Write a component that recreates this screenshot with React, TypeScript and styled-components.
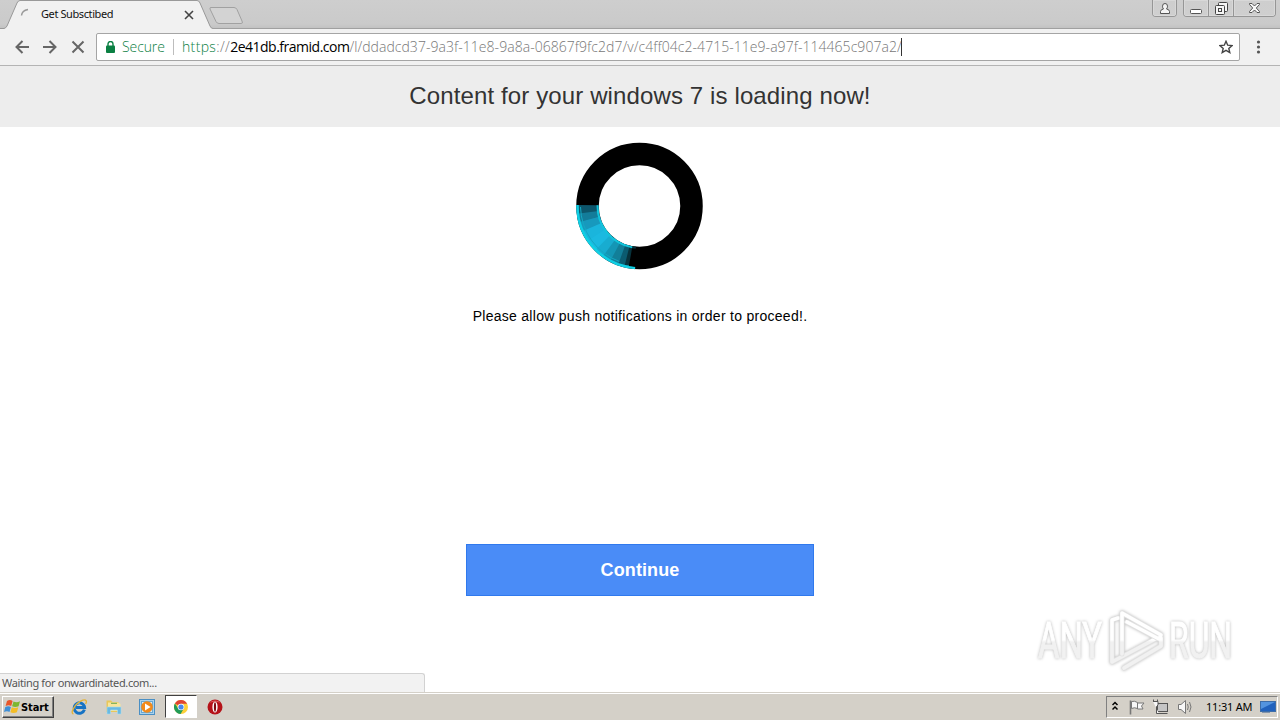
import styled, { createGlobalStyle, css } from "styled-components";

/*--------------------------
    Styled
--------------------------*/
const UiFont = css`
    font-family: "Noto Sans", "Open Sans", sans-serif;
`;

const GlobalStyle = createGlobalStyle`
    * {
        box-sizing: border-box;
    }

    body {
        margin: 0;
        background-color: #fff;
        overflow: hidden;
    }

    svg {
        display: block;
        flex-shrink: 0;
    }
`;

const Desktop = styled.div`
    position: relative;
    display: flex;
    flex-direction: column;
    width: 1280px;
    height: 720px;
    overflow: hidden;
`;

const TabStrip = styled.div`
    display: flex;
    height: 29px;
    background: linear-gradient(#cecece 0, #cacaca 24px, #c2c2c2 28px);
    border-bottom: 1px solid #a0a0a0;
`;
const Tab = styled.div`
    position: relative;
    display: flex;
    width: 208px;
    height: 29px;
    padding: 0 14px 0 20px;
    align-items: center;
`;
const TabShape = styled.svg`
    position: absolute;
    top: 0;
    left: 0;
`;
const TabSpinner = styled.svg`
    position: relative;
`;
const TabTitle = styled.span<{ $width: number }>`
    position: relative;
    width: ${(props) => props.$width}px;
    margin: 0 0 2px 7px;
    color: #111;
    font-size: 11px;
    line-height: 26px;
    letter-spacing: -0.4px;
    white-space: nowrap;
    ${UiFont}
`;
const TabClose = styled.svg`
    position: relative;
    margin: 1px 0 0 auto;
`;
const WindowControls = styled.div`
    display: flex;
    margin: 0 4px 0 auto;
    gap: 6px;
`;
const ControlGroup = styled.div`
    display: flex;
    height: 17px;
    border: 1px solid #969696;
    border-top: 0;
    border-radius: 0 0 4px 4px;
    overflow: hidden;
`;
const ControlButton = styled.div<{ $width: number }>`
    display: flex;
    width: ${(props) => props.$width}px;
    align-items: center;
    justify-content: center;
    background: linear-gradient(#cecece, #cfcfcf);
    box-shadow: inset 0 0 0 1px #d8d8d8;

    & + & {
        border-left: 1px solid #969696;
    }
`;

const Toolbar = styled.div`
    display: flex;
    height: 37px;
    padding: 0 15px 0 15px;
    align-items: center;
    background-color: #f1f1f1;
    border-bottom: 1px solid #b4b4b4;
`;
const NavButtons = styled.div`
    display: flex;
    width: 81px;
    gap: 14px;
`;
const AddressBar = styled.div`
    display: flex;
    width: 1144px;
    height: 28px;
    margin-right: 16px;
    padding: 0 6px 0 9px;
    align-items: center;
    border: 1px solid #a5a5a5;
    border-radius: 2px;
    background-color: #fff;
    font-size: 14px;
    font-weight: 300;
    line-height: 26px;
    white-space: nowrap;
    font-family: "Open Sans", "Noto Sans", sans-serif;
`;
const Secure = styled.span`
    width: 51px;
    margin-left: 7px;
    padding-right: 8px;
    color: #0b8043;
    letter-spacing: -0.1px;
`;
const Divider = styled.span`
    width: 1px;
    height: 16px;
    margin-right: 8px;
    background-color: #bdbdbd;
`;
const UrlPart = styled.span<{ $color: string; $spacing?: number; $weight?: number }>`
    color: ${(props) => props.$color};
    letter-spacing: ${(props) => props.$spacing ?? 0}px;
    font-weight: ${(props) => props.$weight ?? 300};
`;
const Caret = styled.span`
    width: 1px;
    height: 18px;
    margin-left: -1px;
    background-color: #333;
`;
const Star = styled.svg`
    margin-left: auto;
`;

const Page = styled.main`
    display: flex;
    height: 626px;
    flex-direction: column;
    align-items: center;
    background-color: #fff;
    font-family: "Liberation Sans", Arial, sans-serif;
`;
const PageHeader = styled.h1`
    width: 100%;
    height: 61px;
    margin: 0 0 15px 0;
    background-color: #ededed;
    color: #333;
    font-size: 24px;
    font-weight: normal;
    line-height: 60px;
    letter-spacing: 0.12px;
    text-align: center;
`;
const Message = styled.p`
    margin: 37px 0 0 0;
    color: #000;
    font-size: 14px;
    line-height: 18px;
    letter-spacing: 0.28px;
`;
const ContinueButton = styled.button`
    width: 348px;
    height: 52px;
    margin: 219px 0 0 0;
    padding: 0;
    border: 1px solid #3079ed;
    background-color: #4a8cf7;
    color: #fff;
    font-family: inherit;
    font-size: 18px;
    font-weight: bold;
    letter-spacing: 0.1px;
`;

const StatusBubble = styled.div`
    position: absolute;
    left: 0;
    bottom: 28px;
    width: 425px;
    height: 19px;
    padding-left: 2px;
    border: 1px solid #d2d2d2;
    border-left: 0;
    border-bottom: 0;
    border-radius: 0 3px 0 0;
    background-color: #f2f2f2;
    color: #555;
    font-size: 11px;
    line-height: 18px;
    letter-spacing: -0.37px;
    white-space: nowrap;
    ${UiFont}
`;
const Watermark = styled.svg`
    position: absolute;
    right: 30px;
    bottom: 40px;
    overflow: visible;
    filter: drop-shadow(0 0 1.5px rgba(0, 0, 0, 0.28));
`;

const Taskbar = styled.div`
    display: flex;
    height: 28px;
    padding: 3px 2px 2px;
    background-color: #d4d0c8;
    box-shadow: inset 0 1px 0 #d4d0c8, inset 0 2px 0 #fff;
`;
const StartButton = styled.div`
    display: flex;
    width: 52px;
    height: 22px;
    margin-top: 1px;
    padding-left: 1px;
    align-items: center;
    border: 1px solid;
    border-color: #fff #404040 #404040 #fff;
    box-shadow: inset -1px -1px 0 #808080;
    color: #000;
    font-family: "DejaVu Sans Condensed", "Noto Sans", sans-serif;
    font-size: 11px;
    font-weight: bold;
    letter-spacing: -0.1px;
`;
const QuickLaunch = styled.div`
    display: flex;
    margin-left: 9px;
`;
const TaskItem = styled.div<{ $active?: boolean }>`
    display: flex;
    width: 34px;
    height: 23px;
    padding-right: 2px;
    align-items: center;
    justify-content: center;
    ${(props) =>
        props.$active &&
        css`
            width: 32px;
            margin-right: 2px;
            padding-right: 0;
            border: 1px solid;
            border-color: #404040 #fff #fff #404040;
            background-color: #fff;
        `}
`;
const Tray = styled.div`
    display: flex;
    width: 172px;
    height: 22px;
    margin: 1px 0 0 auto;
    padding: 0 1px 0 5px;
    align-items: center;
    border: 1px solid;
    border-color: #808080 #fff #fff #808080;
`;
const Clock = styled.span`
    width: 47px;
    margin: 0 8px 0 12px;
    color: #000;
    font-size: 11px;
    letter-spacing: -0.2px;
    line-height: 18px;
    padding-bottom: 1px;
    white-space: nowrap;
    ${UiFont}
`;

/*--------------------------
    Loading ring
--------------------------*/
const ringPoint = (radius: number, degree: number) => {
    const angle = (degree * Math.PI) / 180;
    return `${63.5 + radius * Math.cos(angle)} ${64 + radius * Math.sin(angle)}`;
};

const ringArc = (radius: number, from: number, to: number) =>
    `M${ringPoint(radius, from)} A${radius} ${radius} 0 0 1 ${ringPoint(radius, to)}`;

const ringSegments = [
    { from: 95, to: 105, color: "#07323c" },
    { from: 104, to: 111, color: "#0b5b70" },
    { from: 110, to: 119, color: "#127f99" },
    { from: 118, to: 127, color: "#1496b5" },
    { from: 126, to: 136, color: "#18acd0" },
    { from: 135, to: 147, color: "#1bb9e0" },
    { from: 146, to: 157, color: "#1ab5dc" },
    { from: 156, to: 166, color: "#1799bd" },
    { from: 165, to: 174, color: "#137c9a" },
    { from: 173, to: 181, color: "#0d566c" },
];

const LoadingRing = () => (
    <svg width="129" height="128" viewBox="0 0 129 128">
        <circle cx="63.5" cy="64" r="52" fill="none" stroke="#000" strokeWidth="22.5" />
        {ringSegments.map(({ from, to, color }) => (
            <path key={from} d={ringArc(52, from, to)} fill="none" stroke={color} strokeWidth="22" />
        ))}
        <path d={ringArc(62, 94, 181)} fill="none" stroke="#10cfe4" strokeWidth="2.6" />
        <path d={ringArc(59, 110, 179)} fill="none" stroke="#13a9c4" strokeWidth="1" />
        <path d={ringArc(42, 100, 181)} fill="none" stroke="#10c4dc" strokeWidth="2" />
        <path d={ringArc(52, 90, 100)} fill="none" stroke="#000" strokeWidth="18" />
    </svg>
);

/*--------------------------
    Window icons
--------------------------*/
const NavIcon = ({ path }: { path: string }) => (
    <svg width="14" height="14" viewBox="0 0 14 14" fill="none" stroke="#666" strokeWidth="2">
        <path d={path} />
    </svg>
);

const UserIcon = () => (
    <svg width="12" height="13" viewBox="0 0 12 13" fill="#f4f4f4" stroke="#555">
        <path d="M1.5 11.5V9.5Q1.5 7.5 4.5 7Q3.5 6 3.5 4.2A2.5 2.7 0 0 1 8.5 4.2Q8.5 6 7.5 7Q10.5 7.5 10.5 9.5V11.5Z" />
    </svg>
);

const MinimizeIcon = () => (
    <svg width="12" height="13" viewBox="0 0 12 13">
        <rect x=".5" y="7.5" width="11" height="4" rx="1" fill="#fff" stroke="#555" />
    </svg>
);

const RestoreIcon = () => (
    <svg width="13" height="13" viewBox="0 0 13 13" fill="#f5f5f5" stroke="#444">
        <rect x="3.5" y=".5" width="9" height="9" rx="1" />
        <rect x=".5" y="3.5" width="9" height="9" rx="1" />
        <rect x="3.5" y="6.5" width="3" height="3" />
    </svg>
);

const CloseIcon = () => (
    <svg width="13" height="12" viewBox="0 0 13 12">
        <path d="M1.5 1.5H4L6.5 4L9 1.5H11.5V2.5L8.3 6L11.5 9.5V10.5H9L6.5 8L4 10.5H1.5V9.5L4.7 6L1.5 2.5Z" fill="#f7f7f7" stroke="#555" />
    </svg>
);

/*--------------------------
    Taskbar icons
--------------------------*/
const WindowsIcon = () => (
    <svg width="17" height="16" viewBox="0 0 17 16">
        <path d="M3 2Q6 .2 8.6 2L7.2 7Q4.8 5.5 1.6 7Z" fill="#e8562a" />
        <path d="M9.5 2.4Q12.5 4 16 2.3L14.6 7.3Q11.2 8.8 8.1 7.3Z" fill="#7db72f" />
        <path d="M1.3 8Q4.4 6.6 6.9 8L5.5 13Q3 11.4 0 13Z" fill="#3f8fd6" />
        <path d="M7.8 8.3Q10.9 9.8 14.3 8.3L12.9 13.2Q9.5 14.8 6.4 13.3Z" fill="#f4bd26" />
    </svg>
);

const ExplorerIcon = () => (
    <svg width="17" height="16" viewBox="0 0 17 16" fill="none">
        <path d="M13.4 10.6A5.2 5.2 0 1 1 13.6 8.6H5" stroke="#1673c4" strokeWidth="3" />
        <path d="M4.6 6.2Q6.2 3.8 9 4" stroke="#70c7f1" />
        <path d="M2.4 15C-1.5 14 4.5 4 11.8 1.2C15.6 0 16 2.6 14.6 5" stroke="#e4b339" strokeWidth="1.4" />
    </svg>
);

const FolderIcon = () => (
    <svg width="17" height="16" viewBox="0 0 17 16">
        <path d="M1.5 1.5H6L7.5 3H13.5V13H1.5Z" fill="#e9c75a" />
        <path d="M3 3.5H13L15.5 5V12H3Z" fill="#f8e59a" />
        <path d="M6 4.3H12" stroke="#69a84f" />
        <path d="M2 8H16V15H12.5V11H5.5V15H2Z" fill="#69b9e2" stroke="#a8dbf2" strokeWidth=".6" />
    </svg>
);

const MediaIcon = () => (
    <svg width="16" height="16" viewBox="0 0 16 16">
        <rect x=".5" y=".5" width="15" height="15" fill="#a9d2ed" stroke="#4a8fc4" />
        <rect x="2.5" y="2.5" width="11" height="11" fill="#d8ebf6" stroke="#69a8d2" />
        <circle cx="8" cy="8" r="5.8" fill="#f28a1b" />
        <path d="M6 4.6L11.6 8L6 11.4Z" fill="#fff" />
    </svg>
);

const ChromeIcon = () => (
    <svg width="14" height="14" viewBox="0 0 14 14">
        <circle cx="7" cy="7" r="7" fill="#fdd039" />
        <path d="M7 7L.9 3.5A7 7 0 0 1 13.1 3.8H7Z" fill="#df4434" />
        <path d="M.9 3.5A7 7 0 0 0 6.6 14L9.8 8.6L7 7L4.2 8.6Z" fill="#219b58" />
        <circle cx="7" cy="7" r="3.3" fill="#fff" />
        <circle cx="7" cy="7" r="2.6" fill="#4788ee" />
    </svg>
);

const OperaIcon = () => (
    <svg width="16" height="16" viewBox="0 0 16 16">
        <circle cx="8" cy="8" r="7.5" fill="#b51219" />
        <path d="M2.5 4A7.5 7.5 0 0 1 13.5 4Q8 1 2.5 4Z" fill="#df5b5b" />
        <ellipse cx="8" cy="8" rx="2.6" ry="5.6" fill="#fff" />
        <ellipse cx="8" cy="8" rx="1.1" ry="4.7" fill="#7d0b10" />
    </svg>
);

const TrayIcons = () => (
    <svg width="82" height="18" viewBox="0 0 82 18">
        <path d="M.5 7L3 4.5L5.5 7M.5 11.5L3 9L5.5 11.5" fill="none" stroke="#000" strokeWidth="1.5" />
        <g fill="#f7f7f7" stroke="#777">
            <path d="M18.5 2.5V16.5" strokeWidth="1.6" />
            <path d="M19.5 3.5Q22.5 2.5 25.5 4.5V10.5Q22.5 9 19.5 10.5ZM25.5 5H32L29.5 8L31 11H25.5Z" />
            <rect x="45.5" y="5.5" width="10" height="8" fill="#c5c5c5" stroke="#555" />
            <path d="M47 15.5H55.5" stroke="#555" />
            <path d="M41.5 3V1.5M45.5 3V1.5M41 3.5H46V7L44.5 8.5V15.5H47" stroke="#555" />
            <path d="M66.5 6.5H69L73.5 2.5V15.5L69 11.5H66.5Z" />
            <path d="M75.5 6Q77 9 75.5 12M77.5 4Q80.5 9 77.5 14" fill="none" />
        </g>
    </svg>
);

const DisplayIcon = () => (
    <svg width="16" height="14" viewBox="0 0 16 14">
        <rect x=".5" y="1.5" width="15" height="10" fill="#2162bd" stroke="#3d6da8" />
        <path d="M1 2H15L1 9Z" fill="#5394df" />
        <path d="M2 12.5H10" stroke="#8394ab" />
    </svg>
);

/*--------------------------
    Main
--------------------------*/
const BrowserChrome = () => (
    <>
        <TabStrip>
            <Tab>
                <TabShape width="246" height="29" viewBox="0 0 246 29">
                    <path d="M0 29V28.5H4Q6 28 7 26L17 3Q18.2 .5 20 .5H197Q199 .5 200 3L210 26Q211 28.5 213 28.5V29Z" fill="#f1f1f1" />
                    <path d="M0 28.5H4Q6 28 7 26L17 3Q18.2 .5 20 .5H197Q199 .5 200 3L210 26Q211 28.5 213 28.5" fill="none" stroke="#999" />
                    <path d="M211 7.5H234Q236 7.5 237 9.5L242 21Q243.5 23.5 241 23.5H219Q217 23.5 216 21.5L210 9Q209.5 7.5 211 7.5Z" fill="#d3d3d3" stroke="#a1a1a1" />
                </TabShape>
                <TabSpinner width="14" height="14" viewBox="0 0 14 14">
                    <path d="M1.5 7.5Q2 2.5 8 1.5" fill="none" stroke="#999" strokeWidth="1.5" />
                </TabSpinner>
                <TabTitle $width={80}>Get Subsctibed</TabTitle>
                <TabClose width="10" height="10" viewBox="0 0 10 10">
                    <path d="M1 1L9 9M9 1L1 9" stroke="#444" strokeWidth="1.6" />
                </TabClose>
            </Tab>
            <WindowControls>
                <ControlGroup>
                    <ControlButton $width={23}>
                        <UserIcon />
                    </ControlButton>
                </ControlGroup>
                <ControlGroup>
                    <ControlButton $width={24}>
                        <MinimizeIcon />
                    </ControlButton>
                    <ControlButton $width={25}>
                        <RestoreIcon />
                    </ControlButton>
                    <ControlButton $width={42}>
                        <CloseIcon />
                    </ControlButton>
                </ControlGroup>
            </WindowControls>
        </TabStrip>
        <Toolbar>
            <NavButtons>
                <NavIcon path="M14 7H1.5M7.5 1L1.5 7L7.5 13" />
                <NavIcon path="M0 7H12.5M6.5 1L12.5 7L6.5 13" />
                <NavIcon path="M1.5 1.5L12.5 12.5M12.5 1.5L1.5 12.5" />
            </NavButtons>
            <AddressBar>
                <svg width="9" height="12" viewBox="0 0 9 12">
                    <path d="M2 5V3A2.5 2.5 0 0 1 7 3V5" fill="none" stroke="#0b8043" strokeWidth="1.4" />
                    <rect y="4.5" width="9" height="7.5" rx="1" fill="#0b8043" />
                </svg>
                <Secure>Secure</Secure>
                <Divider />
                <UrlPart $color="#0b8043" $spacing={0.35}>https</UrlPart>
                <UrlPart $color="#777" $spacing={0.35}>://</UrlPart>
                <UrlPart $color="#000" $spacing={-0.5} $weight={400}>2e41db.framid.com</UrlPart>
                <UrlPart $color="#777" $spacing={0.04}>/l/ddadcd37-9a3f-11e8-9a8a-06867f9fc2d7/v/c4ff04c2-4715-11e9-a97f-114465c907a2/</UrlPart>
                <Caret />
                <Star width="14" height="14" viewBox="0 0 14 14">
                    <path d="M7 1.3L8.7 5.2L13 5.6L9.8 8.4L10.8 12.6L7 10.4L3.2 12.6L4.2 8.4L1 5.6L5.3 5.2Z" fill="none" stroke="#444" strokeWidth="1.4" />
                </Star>
            </AddressBar>
            <svg width="5" height="14" viewBox="0 0 5 14" fill="#555">
                <circle cx="2.5" cy="2" r="1.6" />
                <circle cx="2.5" cy="7" r="1.6" />
                <circle cx="2.5" cy="12" r="1.6" />
            </svg>
        </Toolbar>
    </>
);

const AnyRunMark = () => (
    <Watermark width="220" height="80" viewBox="1030 600 220 80">
        <defs>
            <linearGradient id="markFill" gradientUnits="userSpaceOnUse" x1="0" y1="612" x2="0" y2="670">
                <stop offset=".48" stopColor="#fff" />
                <stop offset=".52" stopColor="#f1f1f1" />
            </linearGradient>
        </defs>
        <g fill="url(#markFill)" stroke="url(#markFill)" strokeWidth="1" fontFamily="Roboto, sans-serif" fontSize="50" fontWeight="400">
            <text x="1038" y="658" textLength="64" lengthAdjust="spacingAndGlyphs">ANY</text>
            <text x="1169" y="658" textLength="63" lengthAdjust="spacingAndGlyphs">RUN</text>
        </g>
        <g fill="none" strokeLinejoin="round" strokeLinecap="round">
            <path d="M1118 618L1112 620V662L1157 638" stroke="#e2e2e2" strokeWidth="5" />
            <path d="M1118 618L1112 620V662L1157 638" stroke="url(#markFill)" strokeWidth="3.6" />
            <path d="M1122 654V613L1161 635L1159 639L1127 622M1124 668L1161 646V638" stroke="#e2e2e2" strokeWidth="5" />
            <path d="M1122 654V613L1161 635L1159 639L1127 622M1124 668L1161 646V638" stroke="url(#markFill)" strokeWidth="3.6" />
        </g>
    </Watermark>
);

const App = () => {
    return (
        <Desktop>
            <GlobalStyle />
            <BrowserChrome />
            <Page>
                <PageHeader>Content for your windows 7 is loading now!</PageHeader>
                <LoadingRing />
                <Message>Please allow push notifications in order to proceed!.</Message>
                <ContinueButton>Continue</ContinueButton>
            </Page>
            <Taskbar>
                <StartButton>
                    <WindowsIcon />
                    Start
                </StartButton>
                <QuickLaunch>
                    <TaskItem>
                        <ExplorerIcon />
                    </TaskItem>
                    <TaskItem>
                        <FolderIcon />
                    </TaskItem>
                    <TaskItem>
                        <MediaIcon />
                    </TaskItem>
                    <TaskItem $active>
                        <ChromeIcon />
                    </TaskItem>
                    <TaskItem>
                        <OperaIcon />
                    </TaskItem>
                </QuickLaunch>
                <Tray>
                    <TrayIcons />
                    <Clock>11:31 AM</Clock>
                    <DisplayIcon />
                </Tray>
            </Taskbar>
            <StatusBubble>Waiting for onwardinated.com...</StatusBubble>
            <AnyRunMark />
        </Desktop>
    );
};

export default App;
